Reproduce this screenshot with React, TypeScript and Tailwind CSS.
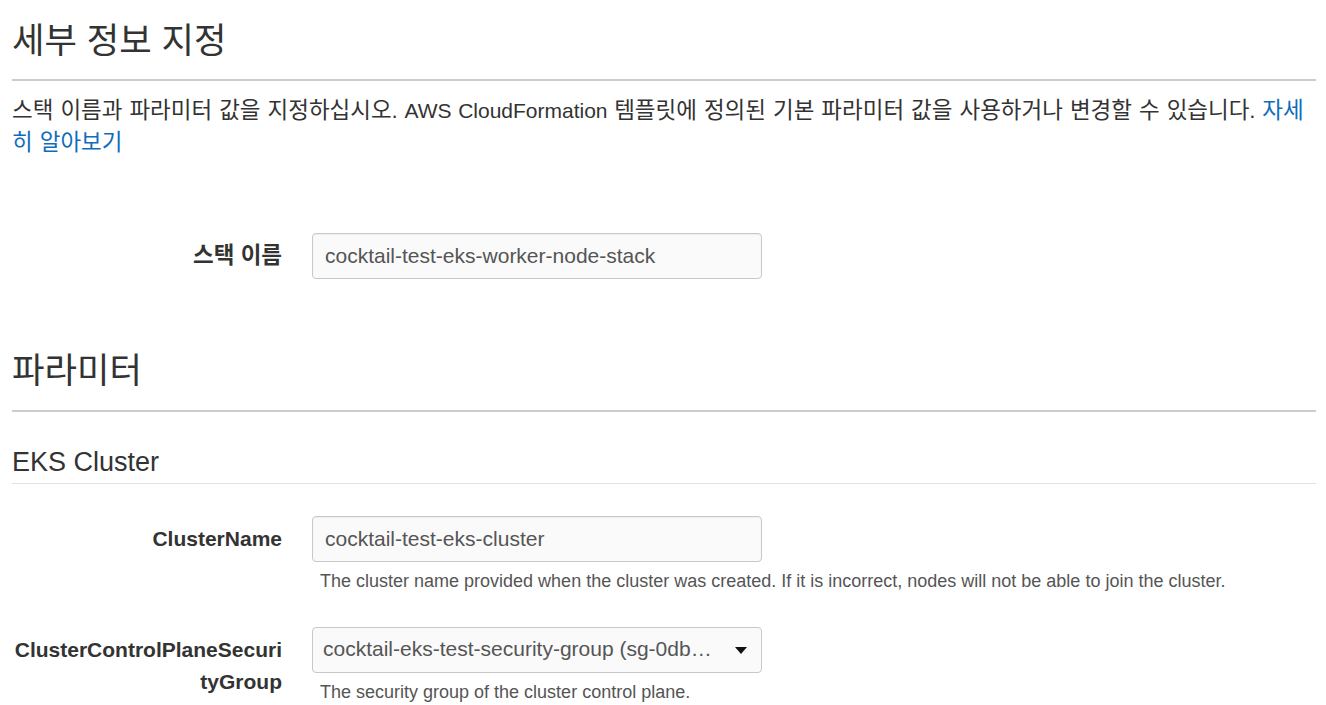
import React from 'react';

const font = "font-['Liberation_Sans','Noto_Sans_CJK_KR',sans-serif]";

// Hangul in the reference renders a bit wider than Noto at the same size
const Ko: React.FC<{ children: React.ReactNode }> = ({ children }) => (
  <span className="text-[1.07em] leading-none">{children}</span>
);

const Field: React.FC<{
  label: React.ReactNode;
  children: React.ReactNode;
  help?: string;
}> = ({ label, children, help }) => (
  <div className="flex items-start gap-[30px]">
    <div className="w-[270px] shrink-0 text-right text-[21px] font-bold leading-[32px] text-[#333] pt-[7px] break-all">
      {label}
    </div>
    <div className="w-[450px]">
      {children}
      {help && (
        <p className="mt-[7px] pl-[8px] text-[18px] leading-[24px] text-[#555] whitespace-nowrap">{help}</p>
      )}
    </div>
  </div>
);

const TextInput: React.FC<{ value: string }> = ({ value }) => (
  <div className="h-[46px] w-[450px] rounded-[4px] border border-[#c8c8c8] bg-[#fafafa] px-[12px] flex items-center text-[21px] text-[#555] shadow-[inset_0_1px_1px_rgba(0,0,0,0.05)]">
    {value}
  </div>
);

const SelectInput: React.FC<{ value: string }> = ({ value }) => (
  <div className="h-[46px] w-[450px] rounded-[4px] border border-[#c8c8c8] bg-[#fafafa] pl-[10px] pr-[14px] flex items-start pt-[5px] text-[21px] text-[#555]">
    <span className="flex-1 truncate pr-[16px]">{value}</span>
    <svg className="mt-[14px] shrink-0" width="12" height="7" viewBox="0 0 12 7">
      <path d="M0 0 L12 0 L6 7 Z" fill="#111" />
    </svg>
  </div>
);

const App: React.FC = () => {
  return (
    <div className={`${font} min-h-screen bg-white pl-[12px] pr-[10px] pt-[20px] text-[#333]`}>
      <h1 className="text-[33px] leading-[44px] font-normal text-[#333]">
        <Ko>세부 정보 지정</Ko>
      </h1>
      <div className="mt-[15px] h-[2px] bg-[#cccccc]" />
      <p className="mt-[14px] text-[21px] leading-[31.5px] text-[#333] [word-spacing:0.8px]">
        <Ko>스택 이름과 파라미터 값을 지정하십시오.</Ko> AWS CloudFormation{' '}
        <Ko>템플릿에 정의된 기본 파라미터 값을 사용하거나 변경할 수 있습니다.</Ko>{' '}
        <a className="text-[#0f6cbd]">
          <Ko>자세히 알아보기</Ko>
        </a>
      </p>

      <div className="mt-[75px]">
        <Field label={<Ko>스택 이름</Ko>}>
          <TextInput value="cocktail-test-eks-worker-node-stack" />
        </Field>
      </div>

      <h2 className="mt-[71px] text-[33px] leading-[44px] font-normal text-[#333]">
        <Ko>파라미터</Ko>
      </h2>
      <div className="mt-[16px] h-[2px] bg-[#cccccc]" />

      <h3 className="mt-[33px] text-[27px] leading-[34px] font-normal text-[#333]">EKS Cluster</h3>
      <div className="mt-[4px] h-[1px] bg-[#e2e2e2]" />

      <div className="mt-[32px] flex flex-col gap-[34px]">
        <Field
          label="ClusterName"
          help="The cluster name provided when the cluster was created. If it is incorrect, nodes will not be able to join the cluster."
        >
          <TextInput value="cocktail-test-eks-cluster" />
        </Field>
        <Field label="ClusterControlPlaneSecurityGroup" help="The security group of the cluster control plane.">
          <SelectInput value="cocktail-eks-test-security-group (sg-0db1234567890abcd)" />
        </Field>
      </div>
    </div>
  );
};

export default App;
